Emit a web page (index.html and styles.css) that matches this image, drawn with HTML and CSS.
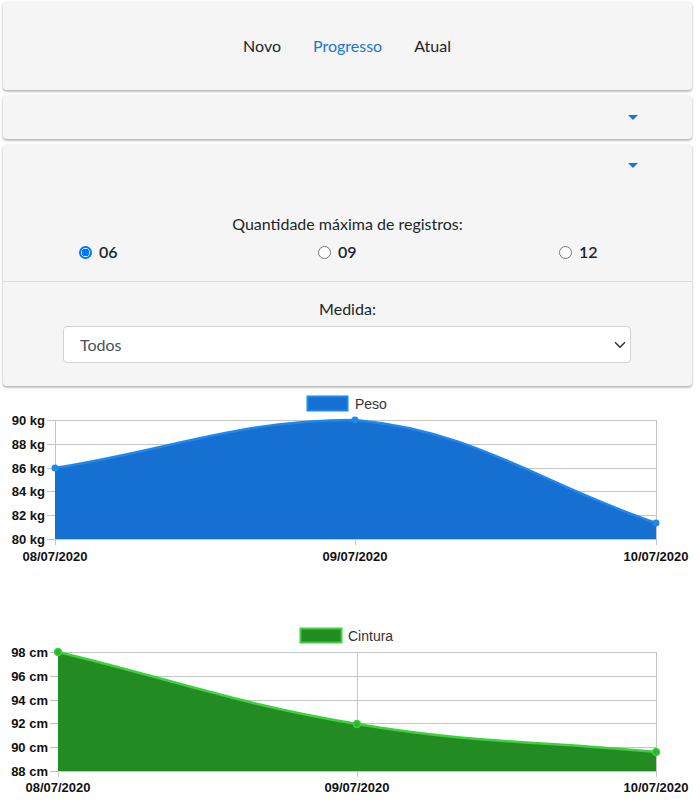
FILE: index.html
```html
<!DOCTYPE html>
<html lang="pt">
<head>
<meta charset="utf-8">
<link rel="stylesheet" href="styles.css">
</head>
<body>
<div class="cards">
  <div class="card nav-card">
    <nav class="nav">
      <a class="nav-item">Novo</a>
      <a class="nav-item active">Progresso</a>
      <a class="nav-item">Atual</a>
    </nav>
  </div>
  <div class="card toggle-card">
    <span class="caret"></span>
  </div>
  <div class="card filter-card">
    <div class="filter-head"><span class="caret"></span></div>
    <div class="filter-section">
      <div class="label">Quantidade máxima de registros:</div>
      <div class="radios">
        <label class="radio"><span class="radio-dot checked"></span>06</label>
        <label class="radio"><span class="radio-dot"></span>09</label>
        <label class="radio"><span class="radio-dot"></span>12</label>
      </div>
    </div>
    <div class="filter-section second">
      <div class="label">Medida:</div>
      <div class="select">
        <span>Todos</span>
        <svg class="chev" width="12" height="12" viewBox="0 0 16 16"><path d="M2 5l6 6 6-6" fill="none" stroke="#343a40" stroke-width="2.2" stroke-linecap="round" stroke-linejoin="round"/></svg>
      </div>
    </div>
  </div>
</div>

<div class="chart chart-one">
  <svg width="700" height="180" viewBox="0 0 700 180">
    <g class="grid">
      <line x1="47" y1="31.5" x2="656" y2="31.5"/>
      <line x1="47" y1="55.5" x2="656" y2="55.5"/>
      <line x1="47" y1="79.5" x2="656" y2="79.5"/>
      <line x1="47" y1="102.5" x2="656" y2="102.5"/>
      <line x1="47" y1="126.5" x2="656" y2="126.5"/>
      <line x1="47" y1="150.5" x2="656" y2="150.5"/>
      <line x1="55.5" y1="31" x2="55.5" y2="156"/>
      <line x1="355.5" y1="31" x2="355.5" y2="156"/>
      <line x1="656.5" y1="31" x2="656.5" y2="156"/>
    </g>
    <path class="fill-blue" d="M55,79 C175,59.8 237.6,31 355,31 C478,42.3 535.6,92.8 656,134 L656,150 L55,150 Z"/>
    <path class="line-blue" d="M55,79 C175,59.8 237.6,31 355,31 C478,42.3 535.6,92.8 656,134"/>
    <circle class="pt-blue" cx="55" cy="79" r="3.5"/>
    <circle class="pt-blue" cx="355" cy="31" r="3.5"/>
    <circle class="pt-blue" cx="656" cy="134" r="3.5"/>
    <rect class="legend-blue" x="307.5" y="7.5" width="40" height="14"/>
    <text class="legend-text" x="355" y="19.5">Peso</text>
    <g class="ylab">
      <text x="45" y="36">90 kg</text>
      <text x="45" y="60">88 kg</text>
      <text x="45" y="84">86 kg</text>
      <text x="45" y="107">84 kg</text>
      <text x="45" y="131">82 kg</text>
      <text x="45" y="155">80 kg</text>
    </g>
    <g class="xlab">
      <text x="55" y="172">08/07/2020</text>
      <text x="355" y="172">09/07/2020</text>
      <text x="656" y="172">10/07/2020</text>
    </g>
  </svg>
</div>

<div class="chart chart-two">
  <svg width="700" height="185" viewBox="0 0 700 185">
    <g class="grid">
      <line x1="50" y1="33.5" x2="656" y2="33.5"/>
      <line x1="50" y1="57.5" x2="656" y2="57.5"/>
      <line x1="50" y1="81.5" x2="656" y2="81.5"/>
      <line x1="50" y1="104.5" x2="656" y2="104.5"/>
      <line x1="50" y1="128.5" x2="656" y2="128.5"/>
      <line x1="50" y1="152.5" x2="656" y2="152.5"/>
      <line x1="58.5" y1="33" x2="58.5" y2="158"/>
      <line x1="357.5" y1="33" x2="357.5" y2="158"/>
      <line x1="656.5" y1="33" x2="656.5" y2="158"/>
    </g>
    <path class="fill-green" d="M58,33 C177.6,61.8 236,84.8 357,105 C475.2,124.8 536.4,121.8 656,133 L656,152 L58,152 Z"/>
    <path class="line-green" d="M58,33 C177.6,61.8 236,84.8 357,105 C475.2,124.8 536.4,121.8 656,133"/>
    <circle class="pt-green" cx="58" cy="33" r="3.5"/>
    <circle class="pt-green" cx="357" cy="105" r="3.5"/>
    <circle class="pt-green" cx="656" cy="133" r="3.5"/>
    <rect class="legend-green" x="300.5" y="9.5" width="41" height="14"/>
    <text class="legend-text" x="348" y="21.5">Cintura</text>
    <g class="ylab">
      <text x="48" y="38">98 cm</text>
      <text x="48" y="62">96 cm</text>
      <text x="48" y="86">94 cm</text>
      <text x="48" y="109">92 cm</text>
      <text x="48" y="133">90 cm</text>
      <text x="48" y="157">88 cm</text>
    </g>
    <g class="xlab">
      <text x="58" y="173">08/07/2020</text>
      <text x="357" y="173">09/07/2020</text>
      <text x="656" y="173">10/07/2020</text>
    </g>
  </svg>
</div>
</body>
</html>
```

FILE: styles.css
```css
* { box-sizing: border-box; }
html, body { margin: 0; padding: 0; background: #fff; }
body {
  font-family: "Segoe UI", Lato, "Noto Sans", sans-serif;
  color: #212529;
  font-size: 16px;
}
.cards {
  margin: 2px 8px 0 3px;
  display: flex;
  flex-direction: column;
  gap: 6px;
}
.card {
  background: #f5f5f5;
  border-radius: 4px;
  box-shadow: 0 1px 3px rgba(0,0,0,0.25), 0 2px 2px rgba(0,0,0,0.12);
}
.nav-card {
  height: 88px;
  display: flex;
  align-items: center;
  justify-content: center;
}
.nav {
  display: flex;
  gap: 32px;
  padding-right: 1px;
}
.nav-item { color: #212529; line-height: 20px; }
.nav-item.active { color: #1976d2; }
.toggle-card {
  height: 43px;
  display: flex;
  align-items: center;
  justify-content: flex-end;
  padding-right: 54px;
}
.caret {
  display: block;
  width: 0;
  height: 0;
  border-left: 5px solid transparent;
  border-right: 5px solid transparent;
  border-top: 5px solid #1976d2;
}
.filter-card { height: 241px; display: flex; flex-direction: column; }
.filter-head {
  height: 40px;
  display: flex;
  justify-content: flex-end;
  align-items: flex-start;
  padding-top: 18px;
  padding-right: 54px;
}
.filter-section { text-align: center; }
.filter-section .label { line-height: 22px; margin-top: 28px; }
.radios {
  display: grid;
  grid-template-columns: 239px 241px auto;
  padding-left: 76px;
  margin-top: 6px;
  height: 41px;
  border-bottom: 1px solid #dcdcdc;
  align-items: start;
}
.radio {
  display: flex;
  align-items: center;
  gap: 7px;
  font-weight: 600;
  font-size: 16px;
  line-height: 22px;
}
.radio-dot {
  width: 13px;
  height: 13px;
  border-radius: 50%;
  border: 1px solid #767676;
  background: #fff;
}
.radio-dot.checked {
  border: 2px solid #0075ff;
  background: radial-gradient(circle, #0075ff 0 3.6px, #fff 4px);
}
.filter-section.second .label { margin-top: 16px; }
.select {
  margin: 6px 61px 0 60px;
  height: 37px;
  background: #fff;
  border: 1px solid #ced4da;
  border-radius: 4px;
  display: flex;
  align-items: center;
  justify-content: space-between;
  padding: 0 4px 0 16px;
  text-align: left;
  color: #495057;
}
.chart { display: block; }
.chart svg { display: block; }
.chart-one { margin-top: 3px; }
.chart-two { margin-top: 50px; }
.grid line { stroke: #c4c4c4; stroke-width: 1; }
.fill-blue { fill: #1570d2; }
.line-blue { fill: none; stroke: #2187ea; stroke-width: 2.5; }
.pt-blue { fill: #2187ea; }
.legend-blue { fill: #1570d2; stroke: #2187ea; stroke-width: 2; }
.fill-green { fill: #228b22; }
.line-green { fill: none; stroke: #3fcf3f; stroke-width: 2.5; }
.pt-green { fill: #2cb62c; stroke: #3fcf3f; stroke-width: 1.5; }
.legend-green { fill: #228b22; stroke: #3fcf3f; stroke-width: 2; }
.legend-text { font-family: "Liberation Sans", Arial, sans-serif; font-size: 14px; fill: #333; }
.ylab text { font-family: "Liberation Sans", Arial, sans-serif; font-size: 13px; font-weight: bold; fill: #111; text-anchor: end; }
.xlab text { font-family: "Liberation Sans", Arial, sans-serif; font-size: 13px; font-weight: bold; fill: #111; text-anchor: middle; }
```
